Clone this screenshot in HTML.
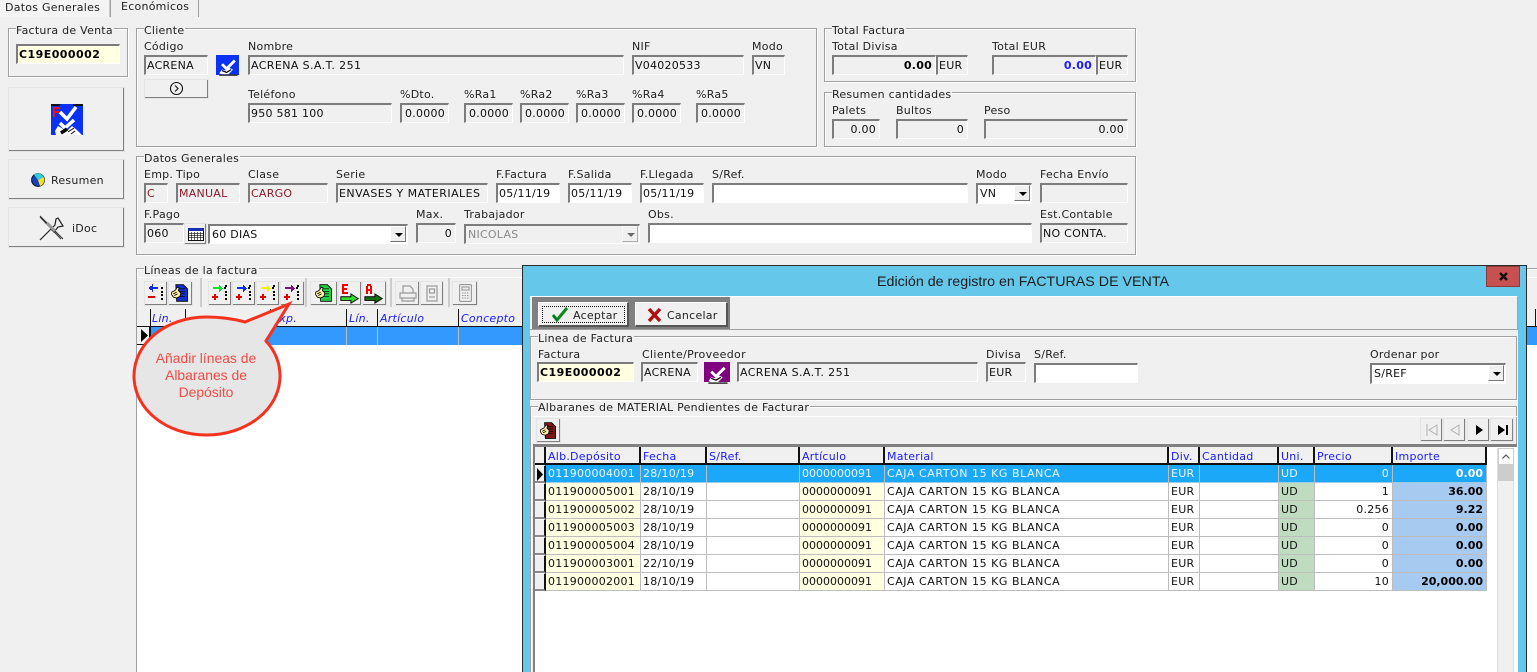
<!DOCTYPE html>
<html lang="es"><head><meta charset="utf-8"><title>Facturas de venta</title>
<style>
html,body{margin:0;padding:0;background:#f0f0f0;width:1537px;height:672px;overflow:hidden}
#root{position:relative;width:1537px;height:672px;overflow:hidden;font:11px/13px "DejaVu Sans","Liberation Sans",sans-serif;letter-spacing:.25px;color:#111;background:#f0f0f0}
div,span{box-sizing:border-box}
.a,.l,.f,.g,.b,.gl{position:absolute}
.l{white-space:nowrap;color:#222}
.g{border:1px solid #a0a0a0;box-shadow:1px 1px 0 #fff,inset 1px 1px 0 #fff}
.gl{background:#f0f0f0;white-space:nowrap;color:#222;padding-right:1px}
.f{border-top:2px solid #7c7c7c;border-left:2px solid #7c7c7c;border-right:1px solid #fff;border-bottom:1px solid #fff;background:#f0f0f0;padding-left:1px;line-height:18px;white-space:nowrap;overflow:hidden}
.w{background:#fff}.y{background:#ffffe1;font-weight:bold;color:#000;letter-spacing:.45px}
.r{text-align:right;padding-right:3px;padding-left:0}
.m{color:#8b1a2b}
.b{background:#f0f0f0;border-top:1px solid #fff;border-left:1px solid #fff;border-right:2px solid #808080;border-bottom:2px solid #808080;outline:1px solid #e4e4e4;outline-offset:-1px}
.arrow{position:absolute;right:1px;top:0;width:16px;height:16px;background:#f0f0f0;border-right:1px solid #777;border-bottom:1px solid #777;border-top:1px solid #fff;border-left:1px solid #fff}
.arrow:after{content:"";position:absolute;left:4px;top:6px;border-left:4px solid transparent;border-right:4px solid transparent;border-top:4px solid #000}
svg{position:absolute;display:block;overflow:visible}
.h{position:absolute;top:0;height:17px;border-right:2px solid #111;background:#f0f0f0;color:#1a1aff;padding:3px 0 0 2px;white-space:nowrap}
table{position:absolute;border-collapse:separate;border-spacing:0;table-layout:fixed}
td{height:18px;padding:2px 0 0 2px;vertical-align:top;border-right:1px solid #bdbdbd;border-bottom:1px solid #bdbdbd;box-sizing:border-box;white-space:nowrap;overflow:hidden;background:#fff;color:#111;line-height:14px}
td:nth-child(4){letter-spacing:0}
td:nth-child(5){letter-spacing:.55px}
td.c{background:#ffffe1}td.u{background:#c0dcc0}td.n{text-align:right;padding:2px 3px 0 0}
td.i{background:#a6caf0;text-align:right;font-weight:bold;padding:2px 3px 0 0;color:#000;letter-spacing:0}
tr.s td{background:#1ca8f8;color:#eaf6ff;border-bottom-color:#9ccbe8}
tr.s td.i{color:#fff}
.ind{position:absolute;left:0;width:12px;height:18px;background:#f0f0f0;border-top:1px solid #fff;border-right:2px solid #111;border-bottom:2px solid #8a8a8a}
</style></head><body><div id="root">
<svg width="0" height="0" style="position:absolute"><defs>
<symbol id="chk" viewBox="0 0 24 24"><path d="M6 10l5 5 9-9" fill="none" stroke="#fff" stroke-width="3"/><path d="M3 20l3-4 5 1 3-3 4 2-5 5H6z" fill="#fff"/><path d="M6 17l5 2 5-3" fill="none" stroke="#000" stroke-width="1.3"/><path d="M3 22h20" stroke="#333" stroke-width="1.6"/></symbol>
<symbol id="ar" viewBox="0 0 22 22"><path d="M4 6h9" stroke="currentColor" stroke-width="2" shape-rendering="crispEdges"/><path d="M10 3h1v1h1v1h1v1h1v1h-1v1h-1v1h-1v1h-1z" fill="currentColor" shape-rendering="crispEdges"/><path d="M3 14h6v2H3zM5 12h2v6H5z" fill="#e00000" shape-rendering="crispEdges"/><path d="M15 5h2v2h-2zM16 3h2v2h-2zM16 9h2v2h-2zM16 12h2v2h-2zM16 16h2v2h-2z" fill="#000" shape-rendering="crispEdges"/></symbol>
<symbol id="hand" viewBox="0 0 24 24"><path d="M7 2h9l5 5v15H8z" fill="currentColor" stroke="#000"/><path d="M11 7h7M11 10h7M12 13h6M12 16h6" stroke="#000" stroke-width=".8"/><path d="M2 11l4-2 3-4 2 1-1 3 3 3-1 4-4 2-4-1-2-3z" fill="#ffef9f" stroke="#000"/><path d="M4 13l4-2M5 15l4-2" stroke="#000"/></symbol>
<symbol id="garrow" viewBox="0 0 24 24"><path d="M2 15h11v-3l8 5-8 5v-3H2z" fill="currentColor" stroke="#000"/></symbol>
</defs></svg>

<!-- tabs -->
<div class="a" style="left:0;top:0;width:110px;height:17px;background:#f4f4f4;border-right:1px solid #ccc"></div>
<div class="a" style="left:110px;top:0;width:89px;height:17px;background:#f0f0f0;border-left:1px solid #a0a0a0;border-right:1px solid #a0a0a0"></div>
<div class="l" style="left:5px;top:1px">Datos Generales</div>
<div class="l" style="left:121px;top:0">Económicos</div>

<!-- left -->
<div class="g" style="left:8px;top:28px;width:120px;height:49px"></div><div class="gl" style="left:16px;top:24px">Factura de Venta</div>
<div class="f y" style="left:16px;top:44px;width:104px;height:20px">C19E000002</div>
<div class="b" style="left:8px;top:87px;width:117px;height:65px"></div>
<svg style="left:51px;top:104px" width="32" height="31" viewBox="0 0 32 31"><rect width="32" height="31" fill="#0a32f5"/><rect x="0" y="0" width="9" height="2" fill="#111"/><rect x="22" y="0" width="10" height="2" fill="#111"/><path d="M2 3h7v2H4v2h4v2H4v4H2z" fill="#f01010"/><path d="M9 8l7 7 9-12M9 19l5 5 9-8" fill="none" stroke="#fff" stroke-width="3.500"/><path d="M7 22l-3 5 1 4h26l-5-5-5-4-5 5z" fill="#fff"/><path d="M10 29l6-4" stroke="#000" stroke-width="3.500"/><path d="M17 28l6-4M20 30l4-3" stroke="#000"/></svg>
<div class="b" style="left:8px;top:159px;width:117px;height:41px"></div>
<svg style="left:31px;top:173px" width="14" height="14" viewBox="0 0 14 14"><circle cx="7" cy="7" r="6.4" fill="#1540c0" stroke="#111"/><path d="M7 7L3 1.6A6.4 6.4 0 0 1 12.6 4z" fill="#2fd0d8"/><path d="M7 7l5.6-3A6.4 6.4 0 0 1 9 13z" fill="#f6e020"/></svg>
<div class="l" style="left:51px;top:174px">Resumen</div>
<div class="b" style="left:8px;top:207px;width:117px;height:41px"></div>
<svg style="left:39px;top:215px" width="27" height="26" viewBox="0 0 27 26"><path d="M24 11l-5 1-4 5-3-3 4-4 1-6 2-1z" fill="#f0f0f0" stroke="#222" stroke-width="1.2"/><path d="M12 14L1 25" stroke="#222" stroke-width="1.2"/><path d="M1 1l23 23M1 2l21 22" stroke="#333" stroke-width="1"/><path d="M8 8l8 8" stroke="#999" stroke-width="3"/></svg>
<div class="l" style="left:72px;top:222px">iDoc</div>

<!-- Cliente -->
<div class="g" style="left:136px;top:28px;width:681px;height:119px"></div><div class="gl" style="left:144px;top:24px">Cliente</div>
<div class="l" style="left:144px;top:40px">Código</div>
<div class="f" style="left:144px;top:55px;width:64px;height:20px">ACRENA</div>
<svg style="left:216px;top:55px;color:#0a32f5" width="23" height="22"><rect width="23" height="20" fill="#0a32f5"/><use href="#chk" width="23" height="22"/></svg>
<div class="b" style="left:144px;top:79px;width:65px;height:20px"></div>
<svg style="left:169px;top:81px" width="15" height="15"><circle cx="7.5" cy="7.5" r="6" fill="none" stroke="#111" stroke-width="1.1"/><path d="M6 4.5l3 3-3 3" fill="none" stroke="#111" stroke-width="1.1"/></svg>
<div class="l" style="left:248px;top:40px">Nombre</div>
<div class="f" style="left:248px;top:55px;width:376px;height:20px;letter-spacing:.4px">ACRENA S.A.T. 251</div>
<div class="l" style="left:632px;top:40px">NIF</div>
<div class="f" style="left:632px;top:55px;width:112px;height:20px">V04020533</div>
<div class="l" style="left:752px;top:40px">Modo</div>
<div class="f" style="left:752px;top:55px;width:33px;height:20px">VN</div>
<div class="l" style="left:248px;top:88px">Teléfono</div>
<div class="f" style="left:248px;top:103px;width:144px;height:20px">950 581 100</div>
<div class="l" style="left:400px;top:88px">%Dto.</div><div class="f r" style="left:400px;top:103px;width:49px;height:20px">0.0000</div>
<div class="l" style="left:464px;top:88px">%Ra1</div><div class="f r" style="left:464px;top:103px;width:49px;height:20px">0.0000</div>
<div class="l" style="left:520px;top:88px">%Ra2</div><div class="f r" style="left:520px;top:103px;width:49px;height:20px">0.0000</div>
<div class="l" style="left:576px;top:88px">%Ra3</div><div class="f r" style="left:576px;top:103px;width:49px;height:20px">0.0000</div>
<div class="l" style="left:632px;top:88px">%Ra4</div><div class="f r" style="left:632px;top:103px;width:49px;height:20px">0.0000</div>
<div class="l" style="left:696px;top:88px">%Ra5</div><div class="f r" style="left:696px;top:103px;width:49px;height:20px">0.0000</div>

<!-- Totales -->
<div class="g" style="left:824px;top:28px;width:312px;height:54px"></div><div class="gl" style="left:832px;top:24px">Total Factura</div>
<div class="l" style="left:832px;top:40px">Total Divisa</div>
<div class="f r" style="left:832px;top:55px;width:104px;height:20px;font-weight:bold;color:#000">0.00</div>
<div class="f" style="left:936px;top:55px;width:32px;height:20px">EUR</div>
<div class="l" style="left:992px;top:40px">Total EUR</div>
<div class="f r" style="left:992px;top:55px;width:104px;height:20px;font-weight:bold;color:#1a1aff">0.00</div>
<div class="f" style="left:1096px;top:55px;width:32px;height:20px">EUR</div>
<div class="g" style="left:824px;top:92px;width:312px;height:55px"></div><div class="gl" style="left:832px;top:88px">Resumen cantidades</div>
<div class="l" style="left:832px;top:104px">Palets</div><div class="f r" style="left:832px;top:119px;width:48px;height:20px">0.00</div>
<div class="l" style="left:896px;top:104px">Bultos</div><div class="f r" style="left:896px;top:119px;width:72px;height:20px">0</div>
<div class="l" style="left:984px;top:104px">Peso</div><div class="f r" style="left:984px;top:119px;width:144px;height:20px">0.00</div>

<!-- Datos generales -->
<div class="g" style="left:136px;top:156px;width:1000px;height:99px"></div><div class="gl" style="left:144px;top:152px">Datos Generales</div>
<div class="l" style="left:144px;top:168px">Emp.</div><div class="l" style="left:176px;top:168px">Tipo</div>
<div class="l" style="left:248px;top:168px">Clase</div><div class="l" style="left:336px;top:168px">Serie</div>
<div class="l" style="left:496px;top:168px">F.Factura</div><div class="l" style="left:568px;top:168px">F.Salida</div>
<div class="l" style="left:640px;top:168px">F.Llegada</div><div class="l" style="left:712px;top:168px">S/Ref.</div>
<div class="l" style="left:976px;top:168px">Modo</div><div class="l" style="left:1040px;top:168px">Fecha Envío</div>
<div class="f m" style="left:144px;top:183px;width:24px;height:20px">C</div>
<div class="f m" style="left:176px;top:183px;width:64px;height:20px">MANUAL</div>
<div class="f m" style="left:248px;top:183px;width:80px;height:20px">CARGO</div>
<div class="f" style="left:336px;top:183px;width:152px;height:20px;letter-spacing:.45px">ENVASES Y MATERIALES</div>
<div class="f w" style="left:496px;top:183px;width:64px;height:20px">05/11/19</div>
<div class="f w" style="left:568px;top:183px;width:64px;height:20px">05/11/19</div>
<div class="f w" style="left:640px;top:183px;width:64px;height:20px">05/11/19</div>
<div class="f w" style="left:712px;top:183px;width:256px;height:20px"></div>
<div class="f w" style="left:976px;top:183px;width:56px;height:21px;padding-left:2px">VN<span class="arrow"></span></div>
<div class="f" style="left:1040px;top:183px;width:88px;height:20px"></div>
<div class="l" style="left:144px;top:208px">F.Pago</div><div class="l" style="left:416px;top:208px">Max.</div>
<div class="l" style="left:464px;top:208px">Trabajador</div><div class="l" style="left:648px;top:208px">Obs.</div>
<div class="l" style="left:1040px;top:208px">Est.Contable</div>
<div class="f" style="left:144px;top:223px;width:40px;height:20px">060</div>
<div class="b" style="left:184px;top:223px;width:23px;height:22px"></div>
<svg style="left:188px;top:228px" width="16" height="13"><rect x=".5" y=".5" width="15" height="12" fill="#fff" stroke="#111"/><rect width="16" height="3" fill="#1a2fb0"/><path d="M1 5.5h14M1 7.5h14M1 9.5h14M3.5 4v8M6.5 4v8M9.5 4v8M12.5 4v8" stroke="#333" stroke-width=".8"/></svg>
<div class="f w" style="left:208px;top:224px;width:200px;height:20px;padding-left:2px">60 DIAS<span class="arrow"></span></div>
<div class="f r" style="left:416px;top:223px;width:40px;height:20px">0</div>
<div class="f" style="left:464px;top:224px;width:176px;height:20px;color:#8a8a8a;padding-left:2px">NICOLAS<span class="arrow" style="opacity:.55"></span></div>
<div class="f w" style="left:648px;top:223px;width:384px;height:20px"></div>
<div class="f" style="left:1040px;top:223px;width:88px;height:20px">NO CONTA.</div>

<!-- Lineas -->
<div class="g" style="left:136px;top:268px;width:1420px;height:420px"></div><div class="gl" style="left:144px;top:264px">Líneas de la factura</div>
<div class="a" style="left:137px;top:277px;width:1400px;height:1px;background:#fff"></div>
<div class="a" style="left:137px;top:278px;width:1400px;height:30px;background:#f0f0f0"></div>
<div class="a" style="left:200px;top:278px;width:2px;height:29px;background:#ccc"></div>
<div class="a" style="left:305px;top:278px;width:2px;height:29px;background:#ccc"></div>
<div class="a" style="left:390px;top:278px;width:2px;height:29px;background:#ccc"></div>
<div class="a" style="left:448px;top:278px;width:2px;height:29px;background:#ccc"></div>
<div class="b" style="left:144px;top:281px;width:24px;height:25px"></div><svg style="left:145px;top:282px" width="22" height="22" shape-rendering="crispEdges"><path d="M4 6h9v2H4zM5 5h2v4H5zM7 3h1v8H7z" fill="#1030f0" transform="translate(0 -1)"/><path d="M3 14h7v2H3z" fill="#e00000"/><path d="M16 5h2v2h-2zM16 9h2v2h-2zM16 12h2v2h-2zM16 16h2v2h-2z" fill="#000"/></svg>
<div class="b" style="left:168px;top:281px;width:25px;height:25px"></div><svg style="left:170px;top:283px;color:#1030d0" width="20" height="20"><use href="#hand" width="20" height="20"/></svg>
<div class="b" style="left:208px;top:281px;width:24px;height:25px"></div><svg style="left:209px;top:282px;color:#10e030" width="22" height="22"><use href="#ar" width="22" height="22"/></svg>
<div class="b" style="left:232px;top:281px;width:24px;height:25px"></div><svg style="left:233px;top:282px;color:#1030f0" width="22" height="22"><use href="#ar" width="22" height="22"/></svg>
<div class="b" style="left:256px;top:281px;width:24px;height:25px"></div><svg style="left:257px;top:282px;color:#f4f010" width="22" height="22"><use href="#ar" width="22" height="22"/></svg>
<div class="b" style="left:280px;top:281px;width:25px;height:25px"></div><svg style="left:281px;top:282px;color:#801080" width="22" height="22"><use href="#ar" width="22" height="22"/></svg>
<div class="b" style="left:310px;top:281px;width:28px;height:25px"></div><svg style="left:314px;top:283px;color:#20d040" width="20" height="20"><use href="#hand" width="20" height="20"/></svg>
<div class="b" style="left:338px;top:281px;width:24px;height:25px"></div><svg style="left:339px;top:283px;color:#30e030" width="22" height="22"><use href="#garrow" width="22" height="22"/><path d="M3 1h6v2H5v2h3v2H5v2h4v2H3z" fill="#f00000"/></svg>
<div class="b" style="left:362px;top:281px;width:25px;height:25px"></div><svg style="left:363px;top:283px;color:#107010" width="22" height="22"><use href="#garrow" width="22" height="22"/><path d="M3 3h1V1h4v2h1v8H7V8H5v3H3zM5 3v3h2V3z" fill="#f00000"/></svg>
<div class="b" style="left:395px;top:281px;width:25px;height:25px"></div><svg style="left:399px;top:285px" width="18" height="17" fill="none" stroke="#999" stroke-width="1.2"><path d="M4 1h7l3 3v4H4zM1 8h16v5H1zM3 13h12v3H3z"/></svg>
<div class="b" style="left:420px;top:281px;width:24px;height:25px"></div><svg style="left:426px;top:285px" width="12" height="17" fill="none" stroke="#999" stroke-width="1.2"><rect x="1" y="1" width="10" height="15"/><rect x="3.5" y="4" width="5" height="4"/><path d="M3 12h6"/></svg>
<div class="b" style="left:452px;top:281px;width:26px;height:25px"></div><svg style="left:459px;top:284px" width="13" height="18" fill="none" stroke="#999" stroke-width="1.1"><rect x=".6" y=".6" width="11.8" height="16.8" rx="1"/><rect x="3" y="3" width="7" height="3"/><path d="M3 9h7M3 11.5h7M3 14h7" stroke-dasharray="1.5 1"/></svg>

<div class="a" style="left:137px;top:309px;width:1400px;height:18px;background:#f0f0f0;border-bottom:1px solid #111"></div>
<div class="a" style="left:137px;top:327px;width:1400px;height:345px;background:#fff"></div>
<div class="a" style="left:150px;top:327px;width:1387px;height:18px;background:#3399ff"></div>
<div class="a" style="left:137px;top:327px;width:14px;height:18px;background:#f0f0f0;border-right:2px solid #111;border-bottom:1px solid #111"></div>
<svg style="left:141px;top:329px" width="8" height="13"><path d="M0 0l7 6.500-7 6.500z" fill="#000"/></svg>
<div class="a" style="left:185px;top:309px;width:1px;height:17px;background:#111"></div>
<div class="a" style="left:270px;top:309px;width:1px;height:17px;background:#111"></div>
<div class="a" style="left:346px;top:309px;width:1px;height:17px;background:#111"></div>
<div class="a" style="left:377px;top:309px;width:1px;height:17px;background:#111"></div>
<div class="a" style="left:458px;top:309px;width:1px;height:17px;background:#111"></div>
<div class="a" style="left:150px;top:309px;width:1px;height:17px;background:#111"></div>
<div class="a" style="left:346px;top:327px;width:1px;height:18px;background:#c0c0c0"></div>
<div class="a" style="left:377px;top:327px;width:1px;height:18px;background:#c0c0c0"></div>
<div class="a" style="left:458px;top:327px;width:1px;height:18px;background:#c0c0c0"></div>
<div class="l" style="left:152px;top:312px;color:#1a1aff;font-style:italic">Lin.</div>
<div class="l" style="left:272px;top:312px;color:#1a1aff;font-style:italic">Exp.</div>
<div class="l" style="left:349px;top:312px;color:#1a1aff;font-style:italic">Lín.</div>
<div class="l" style="left:380px;top:312px;color:#1a1aff;font-style:italic">Artículo</div>
<div class="l" style="left:461px;top:312px;color:#1a1aff;font-style:italic">Concepto</div>
<div class="a" style="left:1535px;top:309px;width:1px;height:17px;background:#111"></div>

<!-- Balloon -->
<svg style="left:0;top:0" width="540" height="450"><path d="M245 322L289 304 266 341C276 352 280 364 280 376 280 409 247 435 206.500 435 166 435 134 409 134 376 134 343 166 317 206.500 317 221 317 234 319 245 322Z" fill="#e6e6e6" stroke="#f4321e" stroke-width="3" stroke-linejoin="miter"/></svg>
<div class="a" style="left:133px;top:350px;width:146px;text-align:center;font:13.9px/17px 'Liberation Sans',Arial,sans-serif;letter-spacing:0;color:#f24a42">Añadir líneas de<br>Albaranes de<br>Depósito</div>

<!-- Modal -->
<div class="a" style="left:522px;top:265px;width:1005px;height:420px;background:#65c8ea;border:1px solid #2a2a2a"></div>
<div class="a" style="left:523px;top:267px;width:1003px;height:30px;text-align:center;font:14.25px/30px 'Liberation Sans',Arial,sans-serif;letter-spacing:0;color:#1c1c1c;padding-right:3px">Edición de registro en FACTURAS DE VENTA</div>
<div class="a" style="left:1486px;top:266px;width:34px;height:21px;background:#c75050;border:1px solid #8e3a3a"></div>
<svg style="left:1499px;top:272px" width="9" height="9"><path d="M1 1l7 7M8 1L1 8" stroke="#111" stroke-width="2.400"/></svg>
<div class="a" style="left:530px;top:296px;width:988px;height:376px;background:#f0f0f0"></div>
<div class="a" style="left:530px;top:296px;width:988px;height:34px;background:#f0f0f0;border-top:1px solid #fff;border-bottom:1px solid #a0a0a0;border-right:1px solid #a0a0a0"></div>
<div class="a" style="left:532px;top:297px;width:198px;height:32px;background:#808080"></div>
<div class="b" style="left:538px;top:302px;width:91px;height:25px;outline:none;border-right-color:#555;border-bottom-color:#555"></div>
<div class="a" style="left:542px;top:306px;width:83px;height:17px;border:1px dotted #111"></div>
<svg style="left:551px;top:306px" width="18" height="17"><path d="M2 9l4 5L16 2" fill="none" stroke="#0a8a1a" stroke-width="3"/><path d="M2 9l4 5" stroke="#063" stroke-width="1"/></svg>
<div class="l" style="left:573px;top:309px">Aceptar</div>
<div class="b" style="left:635px;top:302px;width:93px;height:25px;outline:none;border-right-color:#555;border-bottom-color:#555"></div>
<svg style="left:647px;top:307px" width="15" height="16"><path d="M2 2l11 12M13 2L2 14" stroke="#b01010" stroke-width="3.400"/></svg>
<div class="l" style="left:667px;top:309px">Cancelar</div>

<div class="g" style="left:530px;top:336px;width:987px;height:64px"></div><div class="gl" style="left:538px;top:332px">Linea de Factura</div>
<div class="l" style="left:538px;top:348px">Factura</div>
<div class="f y" style="left:537px;top:362px;width:97px;height:20px">C19E000002</div>
<div class="l" style="left:642px;top:348px;letter-spacing:.35px">Cliente/Proveedor</div>
<div class="f" style="left:641px;top:362px;width:57px;height:20px">ACRENA</div>
<svg style="left:704px;top:362px" width="26" height="23"><rect width="26" height="20" fill="#800080"/><use href="#chk" width="26" height="23"/></svg>
<div class="f" style="left:737px;top:362px;width:241px;height:20px;letter-spacing:.4px">ACRENA S.A.T. 251</div>
<div class="l" style="left:986px;top:348px">Divisa</div>
<div class="f" style="left:986px;top:362px;width:40px;height:20px">EUR</div>
<div class="l" style="left:1034px;top:348px">S/Ref.</div>
<div class="f w" style="left:1034px;top:363px;width:104px;height:20px"></div>
<div class="l" style="left:1370px;top:348px">Ordenar por</div>
<div class="f w" style="left:1370px;top:363px;width:136px;height:21px;padding-left:2px">S/REF<span class="arrow"></span></div>

<div class="g" style="left:530px;top:406px;width:987px;height:290px"></div><div class="gl" style="left:538px;top:401px">Albaranes de MATERIAL Pendientes de Facturar</div>
<div class="a" style="left:533px;top:416px;width:984px;height:1px;background:#fff"></div>
<div class="b" style="left:536px;top:418px;width:25px;height:25px"></div>
<svg style="left:539px;top:421px;color:#801818" width="19" height="19"><use href="#hand" width="19" height="19"/></svg>
<div class="b" style="left:1420px;top:418px;width:23px;height:24px"></div>
<svg style="left:1426px;top:424px" width="12" height="12" fill="none" stroke="#b0b0b0"><path d="M1 0v12M11 1L3 6l8 5z"/></svg>
<div class="b" style="left:1443px;top:418px;width:23px;height:24px"></div>
<svg style="left:1449px;top:424px" width="11" height="12" fill="none" stroke="#b0b0b0"><path d="M10 1L2 6l8 5z"/></svg>
<div class="b" style="left:1467px;top:418px;width:23px;height:24px"></div>
<svg style="left:1475px;top:425px" width="9" height="10"><path d="M1 0l7 5-7 5z" fill="#000"/></svg>
<div class="b" style="left:1490px;top:418px;width:24px;height:24px"></div>
<svg style="left:1497px;top:425px" width="12" height="10"><path d="M1 0l7 5-7 5zM9 0h2v10H9z" fill="#000"/></svg>
<div class="a" style="left:533px;top:444px;width:984px;height:3px;background:#808080"></div>

<div class="a" style="left:533px;top:447px;width:984px;height:225px;background:#fff;border-left:2px solid #808080"></div>
<div class="a" style="left:535px;top:447px;width:952px;height:18px;background:#f0f0f0;border-bottom:2px solid #111;overflow:hidden">
<div class="h" style="left:0;width:11px"></div>
<div class="h" style="left:11px;width:95px">Alb.Depósito</div>
<div class="h" style="left:106px;width:66px">Fecha</div>
<div class="h" style="left:172px;width:93px">S/Ref.</div>
<div class="h" style="left:265px;width:85px">Artículo</div>
<div class="h" style="left:350px;width:284px">Material</div>
<div class="h" style="left:634px;width:31px">Div.</div>
<div class="h" style="left:665px;width:79px">Cantidad</div>
<div class="h" style="left:744px;width:36px">Uni.</div>
<div class="h" style="left:780px;width:78px">Precio</div>
<div class="h" style="left:858px;width:94px">Importe</div>
</div>
<div class="a" style="left:535px;top:465px;width:11px;height:126px">
<div class="ind" style="top:0;width:11px"></div><div class="ind" style="top:18px;width:11px"></div><div class="ind" style="top:36px;width:11px"></div><div class="ind" style="top:54px;width:11px"></div><div class="ind" style="top:72px;width:11px"></div><div class="ind" style="top:90px;width:11px"></div><div class="ind" style="top:108px;width:11px"></div>
</div>
<svg style="left:537px;top:468px" width="7" height="13"><path d="M0 0l6 6.500-6 6.500z" fill="#000"/></svg>
<table style="left:546px;top:465px;width:941px">
<colgroup><col style="width:95px"><col style="width:66px"><col style="width:93px"><col style="width:85px"><col style="width:284px"><col style="width:31px"><col style="width:79px"><col style="width:36px"><col style="width:78px"><col style="width:94px"></colgroup>
<tr class="s"><td>011900004001</td><td>28/10/19</td><td></td><td>0000000091</td><td>CAJA CARTON 15 KG BLANCA</td><td>EUR</td><td></td><td>UD</td><td class="n">0</td><td class="i">0.00</td></tr>
<tr><td class="c">011900005001</td><td>28/10/19</td><td></td><td class="c">0000000091</td><td>CAJA CARTON 15 KG BLANCA</td><td>EUR</td><td></td><td class="u">UD</td><td class="n">1</td><td class="i">36.00</td></tr>
<tr><td class="c">011900005002</td><td>28/10/19</td><td></td><td class="c">0000000091</td><td>CAJA CARTON 15 KG BLANCA</td><td>EUR</td><td></td><td class="u">UD</td><td class="n">0.256</td><td class="i">9.22</td></tr>
<tr><td class="c">011900005003</td><td>28/10/19</td><td></td><td class="c">0000000091</td><td>CAJA CARTON 15 KG BLANCA</td><td>EUR</td><td></td><td class="u">UD</td><td class="n">0</td><td class="i">0.00</td></tr>
<tr><td class="c">011900005004</td><td>28/10/19</td><td></td><td class="c">0000000091</td><td>CAJA CARTON 15 KG BLANCA</td><td>EUR</td><td></td><td class="u">UD</td><td class="n">0</td><td class="i">0.00</td></tr>
<tr><td class="c">011900003001</td><td>22/10/19</td><td></td><td class="c">0000000091</td><td>CAJA CARTON 15 KG BLANCA</td><td>EUR</td><td></td><td class="u">UD</td><td class="n">0</td><td class="i">0.00</td></tr>
<tr><td class="c">011900002001</td><td>18/10/19</td><td></td><td class="c">0000000091</td><td>CAJA CARTON 15 KG BLANCA</td><td>EUR</td><td></td><td class="u">UD</td><td class="n">10</td><td class="i">20,000.00</td></tr>
</table>
<!-- scrollbar -->
<div class="a" style="left:1497px;top:448px;width:17px;height:224px;background:#f0f0f0;border-left:1px solid #ddd;border-right:1px solid #ddd"></div>
<div class="a" style="left:1498px;top:448px;width:16px;height:17px;background:#fff;border:1px solid #ccc"></div>
<svg style="left:1502px;top:454px" width="8" height="5"><path d="M.5 4.500L4 1l3.500 3.500" fill="none" stroke="#555" stroke-width="1.200"/></svg>
<div class="a" style="left:1498px;top:465px;width:16px;height:16px;background:#cdcdcd"></div>
</div></body></html>
